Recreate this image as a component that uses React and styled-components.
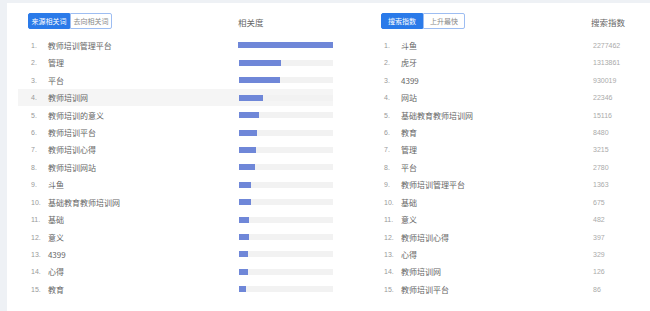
import React from 'react';
import styled, { createGlobalStyle } from 'styled-components';

const GlobalStyle = createGlobalStyle`
  html, body {
    margin: 0;
    padding: 0;
    background: #eef1f5;
    font-family: "Noto Sans CJK SC", "Noto Sans", sans-serif;
    overflow: hidden;
  }
`;

const left = [
  ['教师培训管理平台', 95],
  ['管理', 42],
  ['平台', 41],
  ['教师培训网', 24],
  ['教师培训的意义', 20],
  ['教师培训平台', 18],
  ['教师培训心得', 17],
  ['教师培训网站', 16],
  ['斗鱼', 12],
  ['基础教育教师培训网', 12],
  ['基础', 10],
  ['意义', 10],
  ['4399', 9],
  ['心得', 9],
  ['教育', 7],
];

const right = [
  ['斗鱼', '2277462'],
  ['虎牙', '1313861'],
  ['4399', '930019'],
  ['网站', '22346'],
  ['基础教育教师培训网', '15116'],
  ['教育', '8480'],
  ['管理', '3215'],
  ['平台', '2780'],
  ['教师培训管理平台', '1363'],
  ['基础', '675'],
  ['意义', '482'],
  ['教师培训心得', '397'],
  ['心得', '329'],
  ['教师培训网', '126'],
  ['教师培训平台', '86'],
];

export default function App() {
  return (
    <>
      <GlobalStyle />
      <Card>
        <Panel>
          <Head>
            <Tabs>
              <Tab active>来源相关词</Tab>
              <Tab>去向相关词</Tab>
            </Tabs>
            <ColTitle>相关度</ColTitle>
          </Head>
          <List>
            {left.map(([word, w], i) => (
              <Row key={i} hover={i === 3}>
                <Num>{i + 1}.</Num>
                <Word>{word}</Word>
                <Track>
                  <Fill style={{ width: w }} />
                </Track>
              </Row>
            ))}
          </List>
        </Panel>
        <Panel wide>
          <Head>
            <Tabs>
              <Tab active>搜索指数</Tab>
              <Tab>上升最快</Tab>
            </Tabs>
            <ColTitle>搜索指数</ColTitle>
          </Head>
          <List>
            {right.map(([word, v], i) => (
              <Row key={i}>
                <Num>{i + 1}.</Num>
                <Word>{word}</Word>
                <Value>{v}</Value>
              </Row>
            ))}
          </List>
        </Panel>
      </Card>
    </>
  );
}

const Card = styled.div`
  margin: 3px 0 0 7px;
  height: 320px;
  background: #fff;
  display: flex;
  gap: 38px;
  padding: 10px 0 0 11px;
  box-sizing: border-box;
`;

const Panel = styled.div`
  width: ${p => (p.wide ? '280px' : '315px')};
  display: flex;
  flex-direction: column;
`;

const Head = styled.div`
  display: flex;
  align-items: center;
  height: 16px;
  padding-left: 10px;
`;

const Tabs = styled.div`
  display: flex;
  width: 210px;
`;

const Tab = styled.div`
  width: 42px;
  height: 16px;
  box-sizing: border-box;
  display: flex;
  align-items: center;
  justify-content: center;
  font-size: 7px;
  color: ${p => (p.active ? '#fff' : '#888')};
  background: ${p => (p.active ? '#2a7ae9' : '#fff')};
  border: 1px solid ${p => (p.active ? '#2a7ae9' : '#9dbdf2')};
  border-radius: ${p => (p.active ? '2px 0 0 2px' : '0 2px 2px 0')};
`;

const ColTitle = styled.div`
  font-size: 8.5px;
  color: #666;
  padding-top: 1px;
`;

const List = styled.div`
  margin-top: 7.7px;
  display: flex;
  flex-direction: column;
`;

const Row = styled.div`
  height: 17.43px;
  display: flex;
  align-items: center;
  padding-left: 13px;
  background: ${p => (p.hover ? '#f5f5f5' : 'transparent')};
`;

const Num = styled.span`
  width: 17px;
  font-size: 7px;
  color: #999;
  font-family: "Liberation Sans", sans-serif;
`;

const Word = styled.span`
  width: 192px;
  font-size: 8px;
  color: #666;
`;

const Track = styled.div`
  width: 95px;
  height: 6px;
  background: #f2f2f2;
`;

const Fill = styled.div`
  height: 100%;
  background: #6f87d8;
`;

const Value = styled.span`
  font-size: 7px;
  color: #aaa;
  font-family: "Liberation Sans", sans-serif;
`;
